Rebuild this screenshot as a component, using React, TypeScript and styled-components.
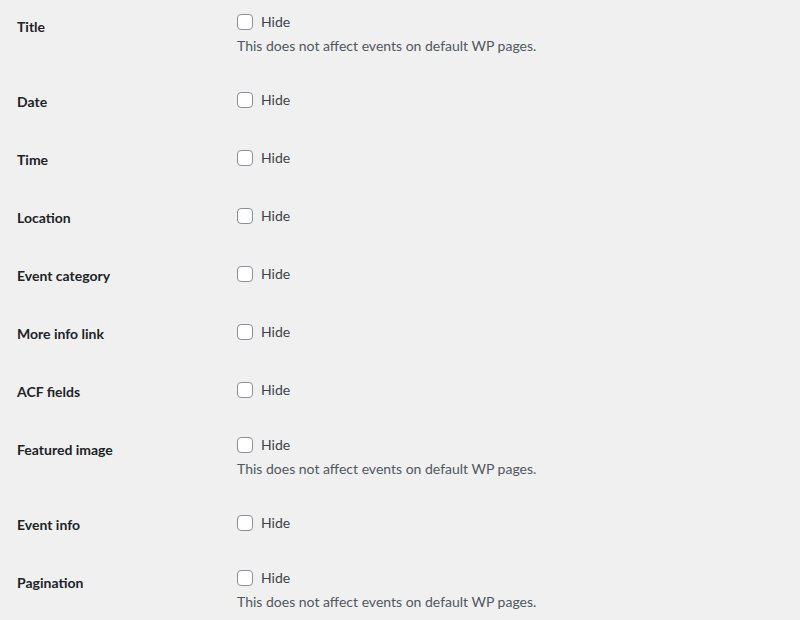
import React from "react";
import styled, { createGlobalStyle } from "styled-components";

const Global = createGlobalStyle`
  html, body {
    margin: 0;
    padding: 0;
    background: #f0f0f1;
  }
  body {
    font-family: Lato, "Noto Sans", "Liberation Sans", sans-serif;
    color: #3c434a;
    font-size: 13px;
  }
`;

const Table = styled.div`
  display: flex;
  flex-direction: column;
  padding-left: 17px;
  width: 783px;
`;

const Row = styled.div`
  display: grid;
  grid-template-columns: 220px 1fr;
  align-items: start;
`;

const Label = styled.div`
  padding: 18px 0 22px 0;
  font-size: 14px;
  line-height: 18px;
  font-weight: 700;
  color: #1d2327;
`;

const Field = styled.div<{ $hasDesc: boolean }>`
  display: flex;
  flex-direction: column;
  padding-top: ${(p) => (p.$hasDesc ? "14px" : "17px")};
  padding-bottom: ${(p) => (p.$hasDesc ? "19px" : "0")};
`;

const CheckLabel = styled.label`
  display: flex;
  align-items: center;
  gap: 8px;
  height: 16px;
  font-size: 14px;
  line-height: 16px;
  color: #3c434a;
  cursor: pointer;
`;

const Box = styled.span`
  box-sizing: border-box;
  width: 16px;
  height: 16px;
  border: 1px solid #8c8f94;
  border-radius: 4px;
  background: #fff;
  flex: none;
`;

const Description = styled.p`
  margin: 6px 0 0 0;
  font-size: 14px;
  line-height: 20px;
  color: #50575e;
`;

const rows: { label: string; desc?: boolean }[] = [
  { label: "Title", desc: true },
  { label: "Date" },
  { label: "Time" },
  { label: "Location" },
  { label: "Event category" },
  { label: "More info link" },
  { label: "ACF fields" },
  { label: "Featured image", desc: true },
  { label: "Event info" },
  { label: "Pagination", desc: true },
];

export default function App() {
  return (
    <>
      <Global />
      <Table>
        {rows.map((r) => (
          <Row key={r.label}>
            <Label>{r.label}</Label>
            <Field $hasDesc={!!r.desc}>
              <CheckLabel>
                <Box />
                Hide
              </CheckLabel>
              {r.desc && (
                <Description>This does not affect events on default WP pages.</Description>
              )}
            </Field>
          </Row>
        ))}
      </Table>
    </>
  );
}
